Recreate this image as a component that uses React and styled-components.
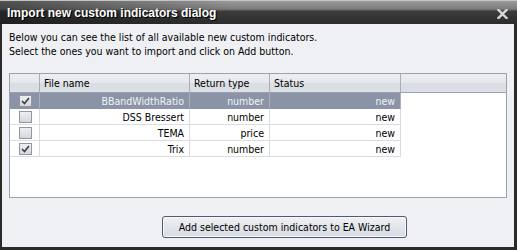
import React from 'react';
import styled, { createGlobalStyle } from 'styled-components';

const Global = createGlobalStyle`
  html, body { margin: 0; padding: 0; background: #ffffff; }
  * { box-sizing: border-box; }
`;

const rows = [
  { name: 'BBandWidthRatio', type: 'number', status: 'new', checked: true, selected: true },
  { name: 'DSS Bressert', type: 'number', status: 'new', checked: false },
  { name: 'TEMA', type: 'price', status: 'new', checked: false },
  { name: 'Trix', type: 'number', status: 'new', checked: true },
];

const App = () => {
  return (
    <>
      <Global />
      <Window>
        <TitleBar>
          <Title>Import new custom indicators dialog</Title>
          <CloseButton>
            <svg width="11" height="10" viewBox="0 0 11 10">
              <path d="M1.5 1 L9.5 9 M9.5 1 L1.5 9" stroke="#d8d8d8" strokeWidth="2.4" strokeLinecap="square" />
            </svg>
          </CloseButton>
        </TitleBar>
        <Body>
          <Intro>
            Below you can see the list of all available new custom indicators.
            <br />
            Select the ones you want to import and click on Add button.
          </Intro>
          <Table>
            <HeaderRow>
              <HeadCell />
              <HeadCell>File name</HeadCell>
              <HeadCell>Return type</HeadCell>
              <HeadCell>Status</HeadCell>
              <HeadCell $last />
            </HeaderRow>
            {rows.map((r) => (
              <Row key={r.name}>
                <Cell $selected={r.selected} $center>
                  <Checkbox>
                    {r.checked && (
                      <svg width="9" height="8" viewBox="0 0 9 8">
                        <path d="M1 4 L3.5 6.5 L8 1" stroke="#3a3a3a" strokeWidth="1.6" fill="none" />
                      </svg>
                    )}
                  </Checkbox>
                </Cell>
                <Cell $selected={r.selected}>{r.name}</Cell>
                <Cell $selected={r.selected}>{r.type}</Cell>
                <Cell $selected={r.selected}>{r.status}</Cell>
              </Row>
            ))}
          </Table>
          <Footer>
            <Button>Add selected custom indicators to EA Wizard</Button>
          </Footer>
        </Body>
      </Window>
    </>
  );
};

const Window = styled.div`
  width: 517px;
  height: 250px;
  display: flex;
  flex-direction: column;
  border-left: 2px solid #2a2a2a;
  border-right: 3px solid #2a2a2a;
  border-bottom: 3px solid #2a2a2a;
  background: #eff0f4;
  font-family: "DejaVu Sans Condensed", "Liberation Sans", Arial, sans-serif;
`;

const TitleBar = styled.div`
  height: 24px;
  margin: 0 -3px 0 -2px;
  padding: 0 9px 0 7px;
  display: flex;
  align-items: center;
  justify-content: space-between;
  border-top: 1px solid #c4c4c4;
  background:
    linear-gradient(to right, rgba(20, 20, 20, 0.55), rgba(20, 20, 20, 0) 45%),
    linear-gradient(to bottom, #9a9a9a 0%, #7c7c7c 35%, #3c3c3c 45%, #2c2c2c 100%);
`;

const Title = styled.div`
  color: #ffffff;
  font-family: "Liberation Sans", Arial, sans-serif;
  font-weight: bold;
  font-size: 12px;
  padding-top: 1px;
  text-shadow: 1px 1px 0 #000000;
`;

const CloseButton = styled.div`
  display: flex;
  align-items: center;
  margin-top: 2px;
`;

const Body = styled.div`
  flex: 1;
  display: flex;
  flex-direction: column;
  padding: 6px 7px 0 7px;
`;

const Intro = styled.div`
  font-size: 10.5px;
  line-height: 14px;
  color: #000000;
`;

const Table = styled.div`
  margin-top: 15px;
  height: 125px;
  border: 1px solid #9aa2b0;
  background: #ffffff;
`;

const HeaderRow = styled.div`
  display: grid;
  grid-template-columns: 30px 150px 80px 131px 1fr;
  height: 19px;
  border-bottom: 1px solid #9aa2b0;
  background: linear-gradient(to bottom, #eceef2 0%, #e6e8ec 45%, #d9dce3 55%, #dcdfe5 100%);
`;

const HeadCell = styled.div`
  border-right: ${(p) => (p.$last ? 'none' : '1px solid #a7aebb')};
  font-size: 10.5px;
  color: #000000;
  padding: 3px 0 0 4px;
`;

const Row = styled.div`
  display: grid;
  grid-template-columns: 30px 150px 80px 131px;
  height: 16px;
`;

const Cell = styled.div`
  display: flex;
  align-items: center;
  justify-content: ${(p) => (p.$center ? 'center' : 'flex-end')};
  padding-right: ${(p) => (p.$center ? '0' : '5px')};
  font-size: 10.5px;
  color: ${(p) => (p.$selected ? '#f2f3f6' : '#000000')};
  background: ${(p) => (p.$selected ? '#8a94a6' : '#ffffff')};
  border-right: 1px solid ${(p) => (p.$selected ? '#aab1be' : '#d9dce3')};
  border-bottom: 1px solid ${(p) => (p.$selected ? '#8a94a6' : '#d9dce3')};
`;

const Checkbox = styled.div`
  width: 13px;
  height: 12px;
  margin-left: 1px;
  border: 1px solid #8f97a5;
  background: linear-gradient(to bottom, #eceef1, #d4d8de);
  display: flex;
  align-items: center;
  justify-content: center;
`;

const Footer = styled.div`
  padding: 18px 0 0 153px;
`;

const Button = styled.div`
  width: 245px;
  height: 22px;
  border: 1px solid #4d5c72;
  border-radius: 3px;
  background: linear-gradient(to bottom, #f0f1f4 0%, #e2e5ea 50%, #d8dce3 100%);
  box-shadow: inset 0 0 0 1px #f6f7f9;
  font-size: 10.5px;
  color: #000000;
  display: flex;
  align-items: center;
  justify-content: center;
`;

export default App;
